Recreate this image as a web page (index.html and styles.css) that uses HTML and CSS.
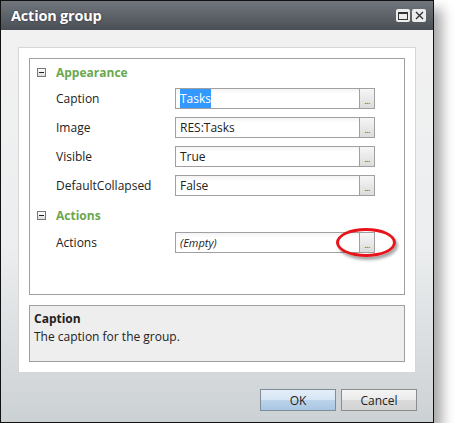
FILE: index.html
```html
<!DOCTYPE html>
<html lang="en">
<head>
    <meta charset="UTF-8">
    <title>Action group</title>
    <link rel="stylesheet" href="styles.css">
</head>
<body>
    <div class="window">
        <div class="titlebar">
            <span class="title">Action group</span>
            <div class="title-buttons">
                <span class="tbtn">
                    <svg width="10" height="8" viewBox="0 0 10 8"><rect x="0.5" y="0.5" width="9" height="7" fill="none" stroke="#333"/><rect x="0" y="0" width="10" height="2" fill="#333"/></svg>
                </span>
                <span class="tbtn">
                    <svg width="9" height="9" viewBox="0 0 9 9"><path d="M1 1 L8 8 M8 1 L1 8" stroke="#333" stroke-width="1.4"/></svg>
                </span>
            </div>
        </div>

        <div class="content">
            <div class="panel">
                <div class="grid">
                    <div class="category">
                        <span class="toggle"></span>
                        <span>Appearance</span>
                    </div>
                    <div class="prop">
                        <span class="label">Caption</span>
                        <div class="field">
                            <span class="value"><span class="selected">Tasks</span></span>
                            <span class="dots">...</span>
                        </div>
                    </div>
                    <div class="prop">
                        <span class="label">Image</span>
                        <div class="field">
                            <span class="value">RES:Tasks</span>
                            <span class="dots">...</span>
                        </div>
                    </div>
                    <div class="prop">
                        <span class="label">Visible</span>
                        <div class="field">
                            <span class="value">True</span>
                            <span class="dots">...</span>
                        </div>
                    </div>
                    <div class="prop">
                        <span class="label">DefaultCollapsed</span>
                        <div class="field">
                            <span class="value">False</span>
                            <span class="dots">...</span>
                        </div>
                    </div>
                    <div class="category second">
                        <span class="toggle"></span>
                        <span>Actions</span>
                    </div>
                    <div class="prop last">
                        <span class="label">Actions</span>
                        <div class="field">
                            <span class="value empty">(Empty)</span>
                            <span class="dots">...</span>
                            <span class="highlight"></span>
                        </div>
                    </div>
                </div>

                <div class="description">
                    <strong>Caption</strong>
                    <div>The caption for the group.</div>
                </div>
            </div>

            <div class="footer">
                <button class="btn ok">OK</button>
                <button class="btn">Cancel</button>
            </div>
        </div>
    </div>
</body>
</html>
```

FILE: styles.css
```css
* { box-sizing: border-box; }
body { margin: 0; background: #fff; font-family: "Open Sans", "DejaVu Sans", sans-serif; font-size: 12px; color: #222; }

.window {
    width: 434px;
    height: 423px;
    border: 1px solid #111;
    display: flex;
    flex-direction: column;
    box-shadow: 8px 9px 12px rgba(0,0,0,0.35);
}

.titlebar {
    height: 29px;
    flex-shrink: 0;
    display: flex;
    align-items: center;
    justify-content: space-between;
    padding: 0 7px 0 10px;
    background: linear-gradient(#72767d, #4a4e55);
}
.title {
    color: #fff;
    font-weight: bold;
    font-size: 14.5px;
    letter-spacing: -0.2px;
    text-shadow: 0 0 2px rgba(0,0,0,0.5);
}
.title-buttons { display: flex; gap: 2px; }
.tbtn {
    width: 14px;
    height: 13px;
    background: #ececec;
    border-radius: 2px;
    display: flex;
    align-items: center;
    justify-content: center;
}

.content {
    flex: 1;
    display: flex;
    flex-direction: column;
    padding: 17px 16px 11px 17px;
    background: linear-gradient(#f1f1f1 0%, #eceeef 55%, #ccd1d4 100%);
}

.panel {
    background: #fff;
    border: 1px solid #d6d6d6;
    padding: 10px;
    height: 326px;
    width: 398px;
}

.grid {
    border: 1px solid #a0a0a0;
    height: 237px;
    padding-top: 2px;
    background: #fff;
}

.category {
    height: 22px;
    display: flex;
    align-items: center;
    color: #6aa84f;
    font-weight: bold;
    padding-left: 7px;
}
.category.second { margin-top: 5px; height: 22px; }
.toggle {
    width: 9px;
    height: 9px;
    border: 1px solid #777;
    background: linear-gradient(#fff, #ddd);
    margin-right: 10px;
    position: relative;
}
.toggle::after {
    content: "";
    position: absolute;
    left: 1px;
    right: 1px;
    top: 3px;
    height: 1px;
    background: #222;
}

.prop {
    height: 29px;
    display: flex;
    align-items: flex-start;
    padding-top: 5px;
}
.prop.last { padding-top: 6px; }
.label {
    width: 145px;
    padding-left: 26px;
    line-height: 21px;
}

.field {
    width: 200px;
    height: 21px;
    border: 1px solid #a0a0a0;
    display: flex;
    position: relative;
    background: linear-gradient(#f4f4f4, #fff 5px);
}
.value {
    flex: 1;
    padding-left: 4px;
    line-height: 19px;
}
.selected {
    background: #3399ff;
    color: #fff;
    padding: 1px 0;
}
.empty { font-style: italic; font-size: 11px; }
.dots {
    width: 15px;
    border-left: 1px solid #a0a0a0;
    background: linear-gradient(#f6f6f6, #dcdcdc);
    font-size: 9px;
    text-align: center;
    line-height: 24px;
    color: #555;
    letter-spacing: -0.5px;
}
.highlight {
    position: absolute;
    left: 160px;
    top: -5px;
    width: 60px;
    height: 29px;
    border: 3px solid #e8141b;
    border-radius: 50%;
    box-shadow: 2px 3px 3px rgba(0,0,0,0.35);
}

.description {
    margin-top: 10px;
    height: 57px;
    border: 1px solid #a0a0a0;
    background: #eeeeee;
    padding: 4px 4px;
    line-height: 18px;
}
.description strong { display: block; }

.footer {
    margin-top: auto;
    display: flex;
    justify-content: flex-end;
    gap: 5px;
}
.btn {
    width: 76px;
    height: 22px;
    border: 1px solid #8c8c8c;
    background: linear-gradient(#f4f4f4 0%, #ebebeb 50%, #dadada 51%, #d4d4d4 100%);
    font-family: inherit;
    font-size: 12px;
    color: #222;
    padding: 0;
}
.btn.ok {
    background: linear-gradient(#e4eef8 0%, #d5e5f5 50%, #bcd4ea 51%, #a9c6e3 100%);
    border-color: #7f8c99;
}
```
